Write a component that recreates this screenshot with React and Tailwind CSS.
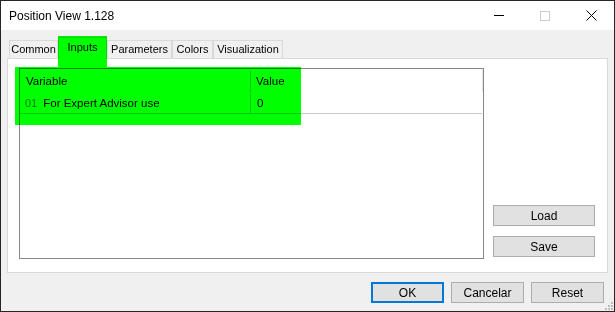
import React from "react";

const font = { fontFamily: '"Liberation Sans", Arial, sans-serif' };

function Tab({ w, children, selected }) {
  return (
    <div
      className={
        "flex items-center justify-center text-[11px] text-black border border-[#d9d9d9] border-b-0 shrink-0 whitespace-nowrap overflow-hidden " +
        (selected ? "h-[22px] bg-white -mb-px relative z-10 pb-[3px]" : "h-[18px] bg-[#f0f0f0]")
      }
      style={{ width: w }}
    >
      {children}
    </div>
  );
}

function Btn({ children, primary, className = "" }) {
  return (
    <div
      className={
        "h-[21px] w-[73px] flex items-center justify-center text-[12px] text-black bg-[#e1e1e1] " +
        (primary ? "border-2 border-[#0078d7]" : "border border-[#adadad]") +
        " " +
        className
      }
    >
      {children}
    </div>
  );
}

export default function App() {
  return (
    <div
      className="relative w-[615px] h-[312px] bg-[#f0f0f0] border border-[#262626] flex flex-col overflow-hidden"
      style={font}
    >
      {/* title bar */}
      <div className="h-[29px] bg-white flex items-center pl-[8px] shrink-0">
        <span className="text-[12px] text-black leading-none">Position View 1.128</span>
        <div className="ml-auto flex items-center h-full">
          <div className="w-[46px] h-full flex items-center justify-center">
            <div className="w-[10px] h-px bg-black" />
          </div>
          <div className="w-[46px] h-full flex items-center justify-center">
            <div className="w-[10px] h-[10px] border border-[#cccccc]" />
          </div>
          <div className="w-[46px] h-full flex items-center justify-center">
            <svg width="11" height="11" viewBox="0 0 11 11">
              <path d="M0.5 0.5 L10.5 10.5 M10.5 0.5 L0.5 10.5" stroke="#000" strokeWidth="1" fill="none" />
            </svg>
          </div>
        </div>
      </div>

      {/* body */}
      <div className="flex-1 flex flex-col px-[6px]">
        <div className="h-[28px] flex items-end pl-[2px] shrink-0">
          <Tab w={49}>Common</Tab>
          <Tab w={49} selected>Inputs</Tab>
          <Tab w={65}>Parameters</Tab>
          <Tab w={41}>Colors</Tab>
          <Tab w={70}>Visualization</Tab>
        </div>

        <div className="h-[215px] bg-white border border-[#d9d9d9] flex pt-[9px] pl-[11px] pr-[12px] pb-[13px] shrink-0">
          {/* list view */}
          <div className="w-[465px] h-full border border-[#828790] bg-white flex flex-col">
            <div className="h-[24px] flex items-center text-[11.5px] text-black relative pt-[2px]">
              <div className="w-[231px] pl-[6px] h-full flex items-center border-r border-[#c8c8c8]">Variable</div>
              <div className="pl-[5px]">Value</div>
              <div className="absolute right-0 top-px w-px h-[22px] bg-[#e5e5e5]" />
            </div>
            <div className="h-[21px] flex items-center text-[11.5px] text-black border-b border-[#c8c8c8] mr-px pt-px">
              <div className="w-[231px] pl-[5px] h-full flex items-center border-r border-[#c8c8c8]">
                <span className="text-[11px] text-[#7a7a7a] mr-[6px]">01</span>
                For Expert Advisor use
              </div>
              <div className="pl-[6px]">0</div>
            </div>
          </div>

          <div className="flex-1 flex flex-col justify-end items-end gap-[10px] pb-[2px]">
            <Btn className="w-[102px]">Load</Btn>
            <Btn className="w-[102px]">Save</Btn>
          </div>
        </div>

        <div className="flex-1 flex items-start justify-end gap-[7px] pt-[9px] pr-[4px]">
          <Btn primary>OK</Btn>
          <Btn>Cancelar</Btn>
          <Btn>Reset</Btn>
        </div>
      </div>

      {/* size grip */}
      <svg className="absolute right-px bottom-px" width="8" height="8" viewBox="0 0 8 8">
        <rect x="6" y="0" width="2" height="2" fill="#bcbcbc" />
        <rect x="3" y="3" width="2" height="2" fill="#bcbcbc" />
        <rect x="6" y="3" width="2" height="2" fill="#bcbcbc" />
        <rect x="0" y="6" width="2" height="2" fill="#bcbcbc" />
        <rect x="3" y="6" width="2" height="2" fill="#bcbcbc" />
        <rect x="6" y="6" width="2" height="2" fill="#bcbcbc" />
      </svg>

      {/* green highlight annotations */}
      <div className="absolute left-[57px] top-[35px] w-[49px] h-[32px] bg-[#00ff00] mix-blend-multiply pointer-events-none z-20" />
      <div className="absolute left-[14px] top-[66px] w-[286px] h-[58px] bg-[#00ff00] mix-blend-multiply pointer-events-none z-20" />
    </div>
  );
}
